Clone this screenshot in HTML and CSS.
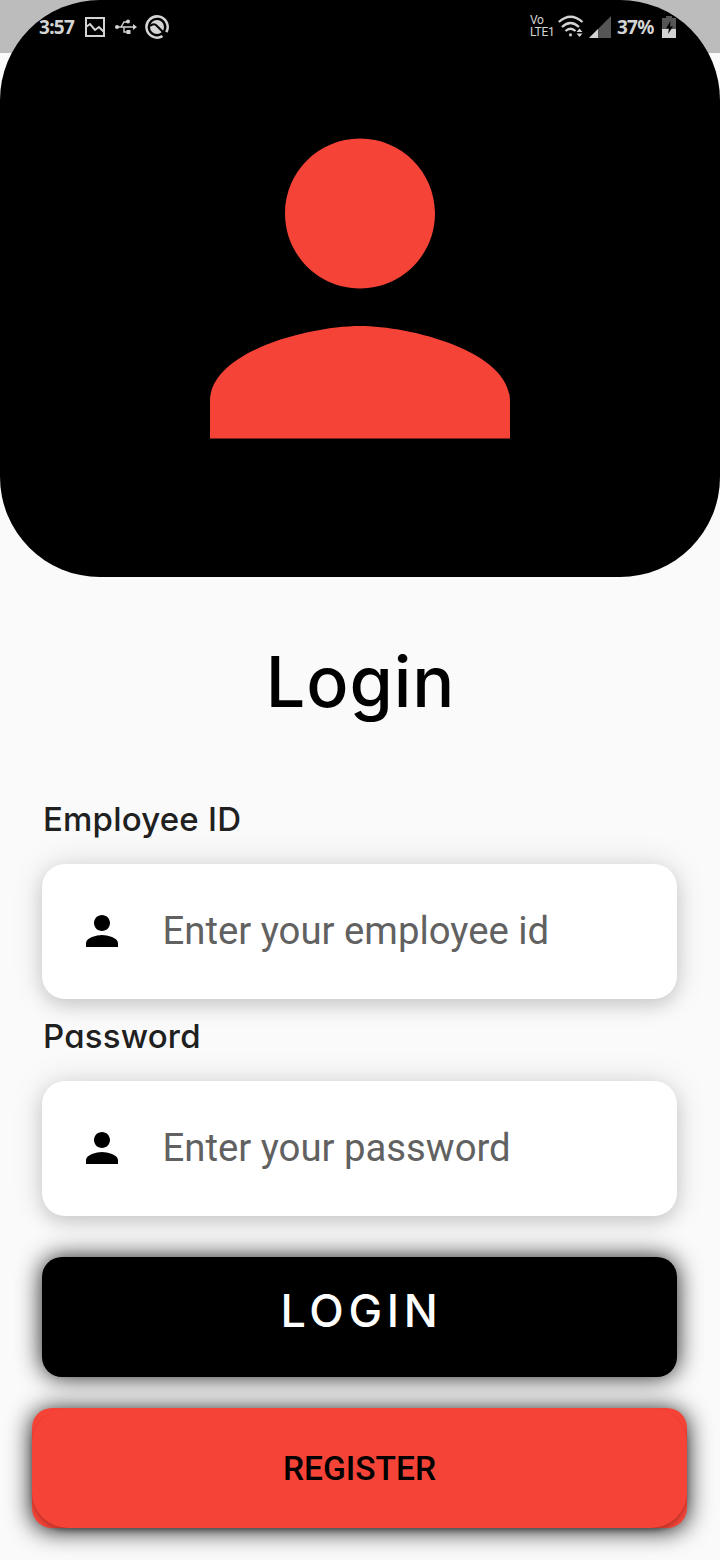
FILE: index.html
```
<!DOCTYPE html>
<html lang="en">
<head>
<meta charset="utf-8">
<title>Login</title>
<link rel="stylesheet" href="styles.css">
</head>
<body>
<header class="hero">
  <svg class="hero-icon" viewBox="4 4 16 16"><path d="M12 12c2.21 0 4-1.79 4-4s-1.79-4-4-4-4 1.790-4 4 1.790 4 4 4zm0 2c-2.670 0-8 1.340-8 4v2h16v-2c0-2.660-5.330-4-8-4z"/></svg>
</header>
<div class="status">
  <div class="status-group">
    <span class="time">3:57</span>
    <svg class="image-icon" width="20" height="20" viewBox="0 0 20 20"><path d="M1 1h18v18H1zM1 10l4-3 5 6 4-3 5 5" fill="none" stroke="currentColor" stroke-width="2"/></svg>
    <svg class="usb-icon" width="22" height="16" viewBox="0 0 22 16"><path d="M1 8h18M6 8l3-5h3M9 8v5h4" fill="none" stroke="currentColor" stroke-width="1.400"/><circle cx="2" cy="8" r="2" fill="currentColor"/><circle cx="13" cy="2.500" r="2" fill="currentColor"/><path d="M11.500 11h4v4h-4zM18 5l4 3-4 3z" fill="currentColor"/></svg>
    <svg width="24" height="24" viewBox="0 0 24 24"><path d="M17.500 21.100A10.600 10.600 0 1 1 21.300 17.200" fill="none" stroke="currentColor" stroke-width="2.500"/><circle cx="12" cy="12" r="7" fill="currentColor"/><path d="M5 11Q9 7.500 12 11L20 19" fill="none" stroke="#000" stroke-width="2"/></svg>
  </div>
  <div class="status-group">
    <span class="volte"><span>Vo</span><span>LTE1</span></span>
    <svg class="wifi-icon" width="26" height="23" viewBox="0 0 26 23"><g fill="none" stroke="currentColor" stroke-width="2.300"><path d="M.8 7Q12.500-3.500 24.500 7"/><path d="M4 12Q12.500 4 21 12"/><path d="M7.500 16Q12.500 11.500 17.500 16"/></g><path d="M11.200 18.500h2.600v2.800h-2.600zM21.500 13.500l3 3.500h-6zM21.500 22l3-3.500h-6z" fill="currentColor"/></svg>
    <svg class="signal-icon" width="22" height="22" viewBox="0 0 22 22"><path d="M22 0v22H0z" fill="#555"/><path d="M9 13v9H0z" fill="currentColor"/></svg>
    <span class="percent">37%</span>
    <svg class="battery-icon" width="14" height="22" viewBox="0 0 14 22"><path d="M4 0h6v2h4v11H0V2h4z" fill="#555"/><path d="M0 13h14v9H0z" fill="currentColor"/><path d="M8.500 5L4 12.500h3L6 18l5-7.500H8z" fill="#000"/></svg>
  </div>
</div>
<main class="content">
  <h1 class="title">Login</h1>
  <label class="label" for="employee">Employee ID</label>
  <div class="field">
    <svg class="field-icon" viewBox="4 4 16 16"><path d="M12 12c2.210 0 4-1.790 4-4s-1.790-4-4-4-4 1.790-4 4 1.790 4 4 4zm0 2c-2.670 0-8 1.340-8 4v2h16v-2c0-2.660-5.330-4-8-4z"/></svg>
    <input class="input" id="employee" type="text" placeholder="Enter your employee id">
  </div>
  <label class="label label-password" for="password">Password</label>
  <div class="field">
    <svg class="field-icon" viewBox="4 4 16 16"><path d="M12 12c2.210 0 4-1.790 4-4s-1.790-4-4-4-4 1.790-4 4 1.790 4 4 4zm0 2c-2.670 0-8 1.340-8 4v2h16v-2c0-2.660-5.330-4-8-4z"/></svg>
    <input class="input" id="password" type="password" placeholder="Enter your password">
  </div>
  <button class="login">LOGIN</button>
  <div class="register-wrap"><button class="register">REGISTER</button></div>
</main>
</body>
</html>
```
FILE: styles.css
```
* { box-sizing: border-box; }
body {
  margin: 0;
  width: 720px;
  height: 1560px;
  overflow: hidden;
  background: #fafafa;
  font-family: Roboto, sans-serif;
}
.hero {
  height: 577px;
  border-radius: 100px;
  background: #000;
  display: flex;
  justify-content: center;
  padding-top: 138px;
}
.hero-icon { width: 300px; height: 301px; fill: #f54337; }
.status {
  position: absolute;
  top: 0;
  left: 0;
  width: 720px;
  height: 53px;
  padding: 0 44px 0 39px;
  display: flex;
  justify-content: space-between;
  align-items: center;
  color: #d4d4d4;
}
/* System bar tint behind the rounded header */
body::before {
  content: "";
  position: absolute;
  z-index: -1;
  inset: 0 0 auto;
  height: 53px;
  background: #bcbcbc;
}
.status-group { display: flex; align-items: center; height: 53px; }
.time {
  width: 36px;
  margin-right: 10px;
  font: 700 19px/24px "Noto Sans", sans-serif;
  letter-spacing: -0.7px;
  white-space: nowrap;
}
.image-icon { margin-right: 10px; }
.usb-icon { margin-right: 8px; }
.volte {
  width: 24px;
  margin-right: 4px;
  display: flex;
  flex-direction: column;
  gap: 1px;
  font: 400 12px/11px Roboto, sans-serif;
  letter-spacing: -0.3px;
}
.wifi-icon { margin-right: 5px; }
.signal-icon { margin-right: 6px; }
.percent {
  width: 38px;
  margin-right: 7px;
  font: 700 19px/24px "Noto Sans", sans-serif;
  letter-spacing: -0.8px;
}
.content {
  display: flex;
  flex-direction: column;
  padding: 0 43px 0 42px;
}
.title, .label, .login {
  font-family: Inter, sans-serif;
  font-feature-settings: "cv11";
}
.title {
  margin: 63px 0 0;
  height: 84px;
  font-size: 70px;
  line-height: 84px;
  font-weight: 500;
  letter-spacing: 0.9px;
  text-indent: 2px;
  text-align: center;
  color: #000;
}
.label {
  height: 40px;
  margin: 75px 0 24.500px;
  padding-left: 1px;
  font-size: 33px;
  line-height: 40px;
  font-weight: 500;
  letter-spacing: 0.2px;
  color: #202020;
  white-space: nowrap;
}
.label-password { margin: 17.500px 0 24.500px; }
.field {
  height: 135px;
  border-radius: 23px;
  background: #fff;
  box-shadow: 0 7px 18px rgba(0, 0, 0, .13), 0 0 32px rgba(0, 0, 0, .13);
  display: flex;
  align-items: center;
  padding-left: 44px;
}
.field-icon { width: 32px; height: 32px; margin-right: 44.5px; }
.input {
  width: 470px;
  height: 60px;
  padding: 0;
  border: 0;
  outline: 0;
  background: transparent;
  font: 400 38.3px/60px Roboto, sans-serif;
}
.input::placeholder { color: #616161; opacity: 1; }
.login {
  height: 120px;
  margin-top: 41.500px;
  padding: 0 0 13px;
  border: 0;
  border-radius: 20px;
  background: #000;
  color: #fff;
  font-size: 45px;
  font-weight: 500;
  letter-spacing: 4.7px;
  text-indent: 4px;
  box-shadow: 0 0 24px rgba(0, 0, 0, .9);
}
.register-wrap {
  height: 120px;
  margin: 31px -10px 0;
  border-radius: 20px;
  background: #f54337;
  box-shadow: 0 2px 24px rgba(0, 0, 0, .95);
}
.register {
  width: 100%;
  height: 120px;
  padding: 1px 0 0;
  border: 0;
  border-radius: 36px;
  background: #f54337;
  box-shadow: 0 3px 4px rgba(0, 0, 0, .25);
  color: #000;
  font: 500 33.500px/119px Roboto, sans-serif;
}
```
